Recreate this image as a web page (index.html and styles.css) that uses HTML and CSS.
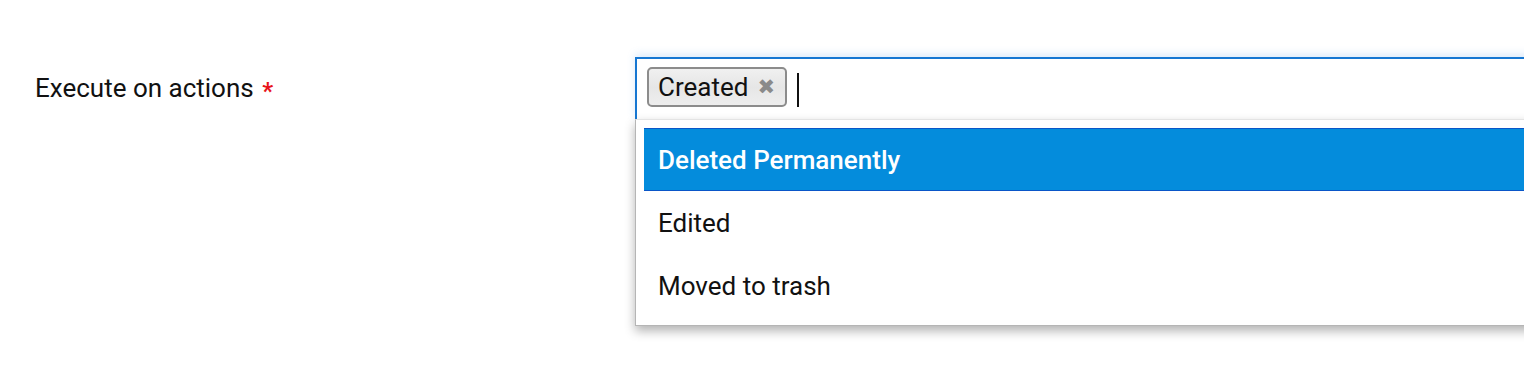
FILE: index.html
```html
<!DOCTYPE html>
<html>
<head>
<meta charset="utf-8">
<link rel="stylesheet" href="styles.css">
</head>
<body>
<div class="row">
  <div class="label">Execute on actions <span class="req">*</span></div>
  <div class="field">
    <div class="input">
      <span class="chip">Created <span class="chip-x">&#10006;</span></span>
      <span class="caret"></span>
    </div>
    <ul class="dropdown">
      <li class="opt active">Deleted Permanently</li>
      <li class="opt">Edited</li>
      <li class="opt">Moved to trash</li>
    </ul>
  </div>
</div>
</body>
</html>
```
FILE: styles.css
```css
html, body {
  margin: 0;
  padding: 0;
  background: #fff;
  overflow: hidden;
  width: 1524px;
  height: 382px;
}
body {
  font-family: Roboto, "Liberation Sans", sans-serif;
  color: #111;
}
.row {
  display: flex;
  padding-top: 57px;
}
.label {
  width: 600px;
  padding-left: 35px;
  font-size: 26px;
  line-height: 62px;
  flex-shrink: 0;
}
.req {
  color: #e8141b;
  font-size: 24px;
  font-weight: 700;
  margin-left: 2px;
  position: relative;
  top: 2px;
}
.field {
  position: relative;
  width: 1000px;
  flex-shrink: 0;
}
.input {
  box-sizing: border-box;
  height: 63px;
  border: 2px solid #1677d2;
  border-bottom: none;
  padding: 8px 10px 0;
  display: flex;
  align-items: flex-start;
  gap: 10px;
  box-shadow: 0 -3px 8px rgba(60, 140, 230, 0.18);
  background: #fff;
}
.chip {
  box-sizing: border-box;
  height: 40px;
  display: inline-flex;
  align-items: center;
  padding: 0 10px 0 9px;
  border: 2px solid #8c8c8c;
  border-radius: 5px;
  background: linear-gradient(#f0f0f0, #e6e6e6 50%, #eeeeee);
  font-size: 26px;
  color: #111;
  gap: 9px;
}
.chip-x {
  color: #8a8a8a;
  font-size: 21px;
  font-family: "DejaVu Sans", sans-serif;
}
.caret {
  width: 2px;
  height: 34px;
  margin-top: 6px;
  background: #111;
}
.dropdown {
  position: absolute;
  left: 0;
  top: 62px;
  width: 100%;
  box-sizing: border-box;
  margin: 0;
  list-style: none;
  padding: 8px 8px;
  background: #fff;
  border: 1px solid #b5b5b5;
  border-top: 1px solid #e4e4e4;
  box-shadow: 0 5px 10px rgba(0, 0, 0, 0.3);
}
.opt {
  height: 63px;
  box-sizing: border-box;
  display: flex;
  align-items: center;
  padding-left: 14px;
  font-size: 26px;
  color: #111;
}
.opt.active {
  background: #048cdc;
  color: #fff;
  border-top: 1px solid #0a56c8;
  border-bottom: 1px solid #0a56c8;
  font-weight: 500;
}
```
